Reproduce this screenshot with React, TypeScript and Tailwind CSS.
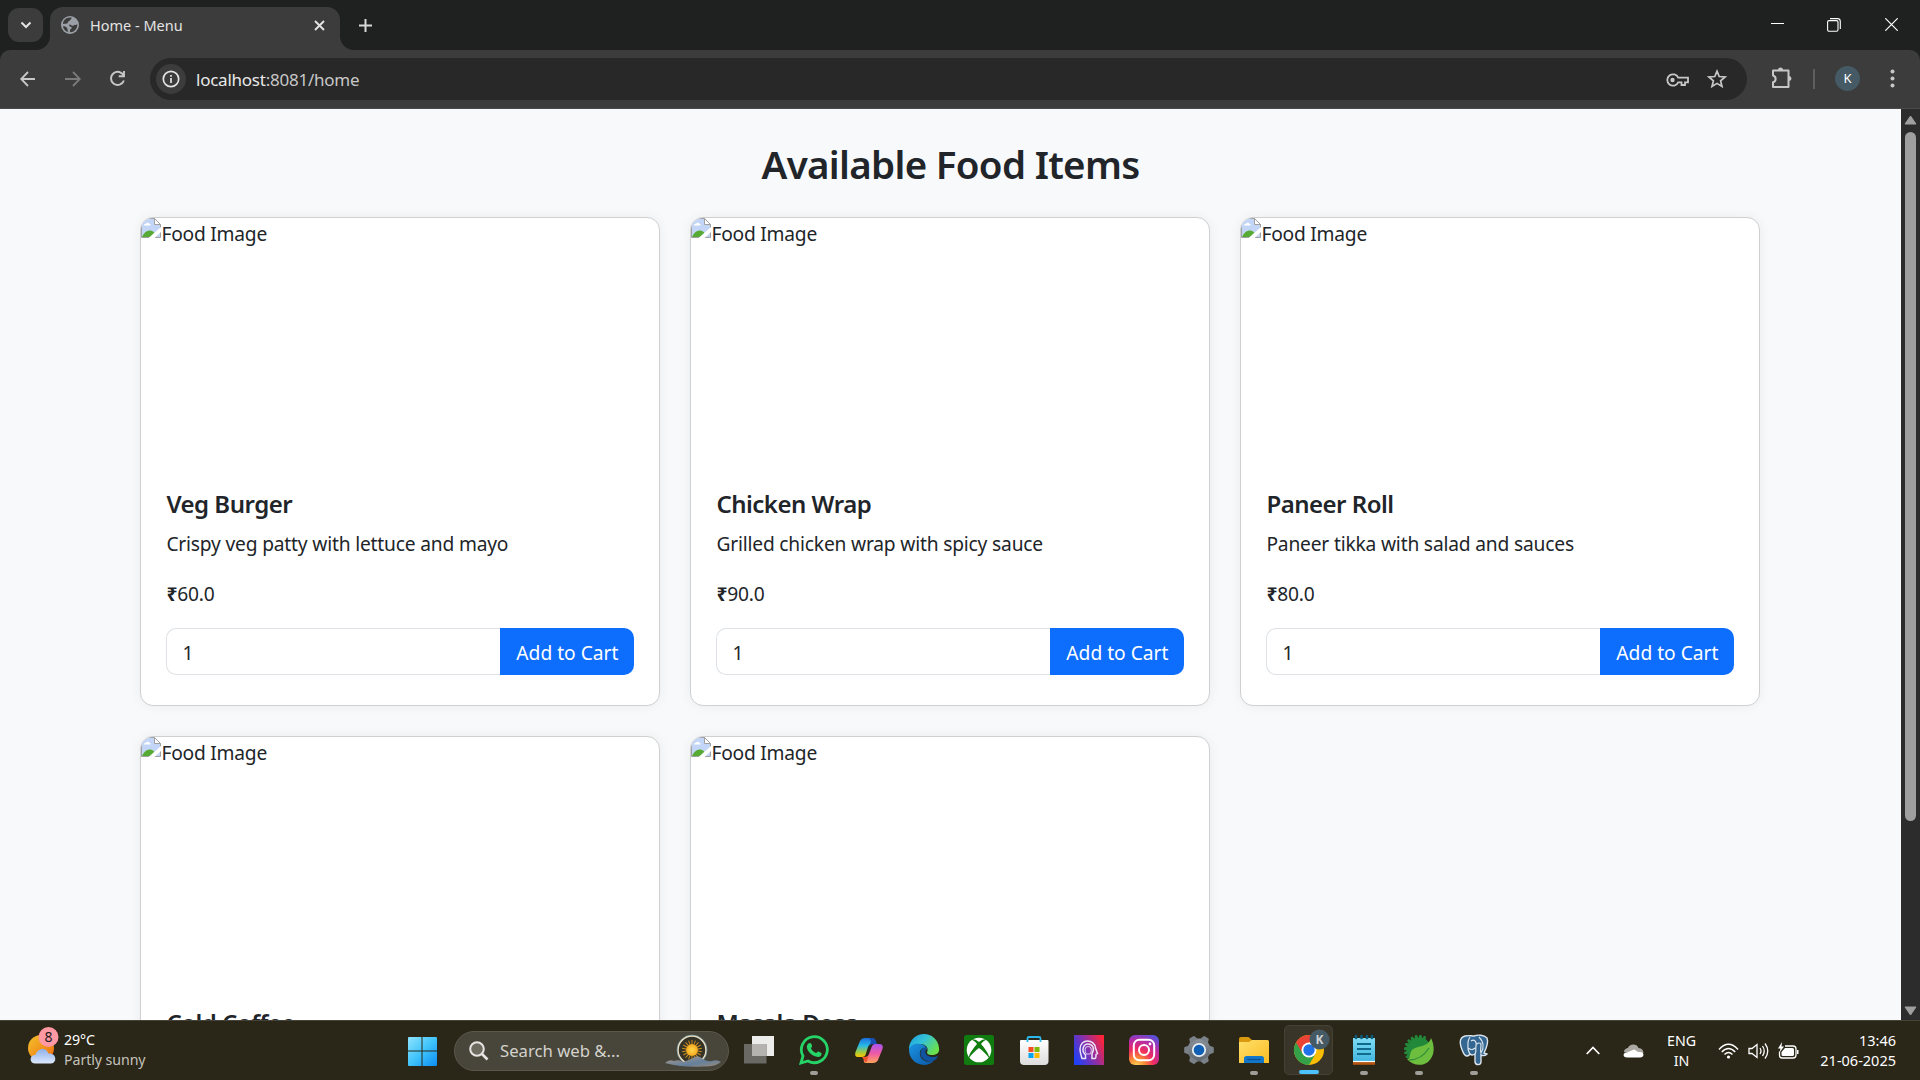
import React from 'react';

type Food = { name: string; desc?: string; price?: string };

const foods: Food[] = [
  { name: 'Veg Burger', desc: 'Crispy veg patty with lettuce and mayo', price: '60.0' },
  { name: 'Chicken Wrap', desc: 'Grilled chicken wrap with spicy sauce', price: '90.0' },
  { name: 'Paneer Roll', desc: 'Paneer tikka with salad and sauces', price: '80.0' },
  { name: 'Cold Coffee' },
  { name: 'Masala Dosa' },
];

function BrokenImage() {
  return (
    <svg width="20" height="20" viewBox="0 0 20 20" className="shrink-0">
      <path d="M0.5 0.5H13.5L19.5 6.5V19.5H0.5Z" fill="#c3d6f7" stroke="#a0a0a0" />
      <path d="M13.5 0.5V6.5H19.5Z" fill="#fff" stroke="#a0a0a0" />
      <path d="M3 7.5c0-1.6 1.6-2 2-1.6C5.500 4.200 8 4.200 8.500 6c1.300 0 1.500 1.500.5 1.500Z" fill="#fff" />
      <path d="M1 19C3 14.500 6 12.500 9 12.500c2 0 3.500 1 4.500 2.500L10 19Z" fill="#57ab35" />
      <path d="M7 20.500L20.500 8.500V13.500L13 20.500Z" fill="#fff" />
    </svg>
  );
}

function FoodCard({ food }: { food: Food }) {
  return (
    <div className="flex h-[489px] flex-col overflow-hidden rounded-[13px] border border-[#cfd0d1] bg-white shadow-[0_0_12px_rgba(0,0,0,0.06)]">
      <div className="flex h-[250px] text-[19.200px] leading-[31px] tracking-[-0.22px]">
        <BrokenImage />
        <span>Food Image</span>
      </div>
      <div className="flex flex-col px-[25px] pt-[21px]">
        <h5 className="mb-[10px] h-[30px] text-[24px] font-semibold leading-[30px] tracking-[-0.5px]">{food.name}</h5>
        {food.desc && (
          <>
            <p className="mb-5 h-[30px] text-[19.200px] leading-[30px] tracking-[-0.18px]">{food.desc}</p>
            <p className="mb-[19px] h-[30px] text-[19.200px] leading-[30px] tracking-[-0.18px]"><b>₹</b>{food.price}</p>
            <div className="flex h-[47px]">
              <div className="flex-1 rounded-l-[10px] border border-r-0 border-[#dee2e6] pl-[15px] text-[19.200px] leading-[47px]">1</div>
              <button className="w-[134px] rounded-r-[10px] bg-[#0d6efd] text-[19.200px] leading-[49px] text-white">Add to Cart</button>
            </div>
          </>
        )}
      </div>
    </div>
  );
}

function Chrome() {
  return (
    <header className="h-[109px] shrink-0 bg-[#1f2120] text-[#e3e3e3]">
      <div className="flex h-[50px]">
        <div className="mt-2 ml-2 flex h-[34px] w-[35px] items-center justify-center rounded-[11px] bg-[#3c3c3c]">
          <svg width="12" height="8" viewBox="0 0 12 8" fill="none" stroke="#e3e3e3" strokeWidth="2"><path d="M1.500 1.500L6 6L10.500 1.500" /></svg>
        </div>
        <div className="relative mt-[7px] ml-[7px] flex h-[43px] w-[290px] items-center rounded-t-[13px] bg-[#3c3c3c] pb-[7px]">
          <svg className="absolute bottom-0 -left-[14px]" width="14" height="14"><path d="M14 0V14H0A14 14 0 0 0 14 0Z" fill="#3c3c3c" /></svg>
          <svg className="absolute bottom-0 -right-[14px]" width="14" height="14"><path d="M0 0V14H14A14 14 0 0 1 0 0Z" fill="#3c3c3c" /></svg>
          <svg className="ml-[11px]" width="18" height="18" viewBox="0 0 18 18">
            <circle cx="9" cy="9" r="9" fill="#9aa0a6" />
            <path d="M11 2C9 3 10 4.500 8 5C6.500 5.500 7.500 7 6 7.500L2 8C2 4.500 5 1.600 9 1.600C9.700 1.600 10.400 1.700 11 2ZM16.300 8C15 9.500 13.500 8.500 12.500 9.500C11.500 10.500 10 9 9 8.500C7.500 8.500 8 10.500 9.500 10.800C11.500 11 11 13 9 13.500V16.300C13.500 16.300 16.700 12.500 16.300 8ZM1.900 10.500C3 10 5 10.500 6 12C7 13 6 14.500 7.500 16.100C4.700 15.500 2.500 13.500 1.900 10.500Z" fill="#3c3c3c" />
          </svg>
          <span className="mt-px ml-[11px] text-[14.500px]">Home - Menu</span>
          <svg className="ml-auto mr-[15px]" width="11" height="11" viewBox="0 0 11 11" stroke="#e3e3e3" strokeWidth="1.900"><path d="M1 1L10 10M10 1L1 10" /></svg>
        </div>
        <svg className="mt-[19px] ml-[19px]" width="13" height="13" viewBox="0 0 13 13" stroke="#d8d8d8" strokeWidth="2"><path d="M6.500 0V13M0 6.500H13" /></svg>
        <div className="ml-auto flex">
          <svg className="mt-[17px] mr-[43px]" width="13" height="13" viewBox="0 0 13 13" stroke="#fff" strokeWidth="1"><path d="M0 6.500H13" /></svg>
          <svg className="mt-[18px] mr-[44px]" width="14" height="14" viewBox="0 0 14 14" fill="none" stroke="#fff" strokeWidth="1.100"><rect x="0.600" y="2.600" width="10.400" height="10.600" rx="1.500" /><path d="M3 .6H10.500C12.500.6 13.300 1.500 13.300 3.500V11" /></svg>
          <svg className="mt-[18px] mr-[22px]" width="13" height="13" viewBox="0 0 13 13" stroke="#fff" strokeWidth="1.200"><path d="M.3.3L12.700 12.700M12.700.3L.3 12.700" /></svg>
        </div>
      </div>
      <div className="flex h-[59px] items-start rounded-t-[10px] border-b border-[#4a4a4a] bg-[#3c3c3c]">
        <svg className="mt-[21px] ml-5" width="16" height="16" viewBox="0 0 16 16" fill="none" stroke="#c7c7c7" strokeWidth="1.800"><path d="M15 8H1.500M8 1L1.200 8L8 15" /></svg>
        <svg className="mt-[21px] ml-[29px]" width="16" height="16" viewBox="0 0 16 16" fill="none" stroke="#7b7b7b" strokeWidth="1.800"><path d="M0 8H14.500M8 1L14.800 8L8 15" /></svg>
        <svg className="mt-[20px] ml-[28px]" width="17" height="17" viewBox="0 0 17 17" fill="none" stroke="#c7c7c7" strokeWidth="1.900"><path d="M14.800 6A6.600 6.600 0 1 0 14.900 10.500M15 1V6.300H9.700" /></svg>
        <div className="mt-2 ml-[24px] flex h-[42px] w-[1597px] items-center rounded-full bg-[#282828]">
          <div className="ml-1.5 flex size-[30px] items-center justify-center rounded-full bg-[#3c3c3c]">
            <svg width="18" height="18" viewBox="0 0 18 18" fill="none" stroke="#e3e3e3" strokeWidth="1.700"><circle cx="9" cy="9" r="7.700" /><path d="M9 8V13M9 5V6.700" /></svg>
          </div>
          <span className="mt-px ml-[10px] text-[17px] tracking-[-0.24px] text-[#c7c7c7]"><span className="text-[#e8e8e8]">localhost</span>:8081/home</span>
          <svg className="ml-auto mt-[2px]" width="23" height="14" viewBox="0 0 23 14" fill="none" stroke="#c7c7c7" strokeWidth="1.800"><path d="M12.200 4.700A5.700 5.700 0 1 0 12.200 9.300H15.500V12H19V9.300H22V4.700Z" /><circle cx="6.500" cy="7" r="2.200" fill="#c7c7c7" stroke="none" /></svg>
          <svg className="ml-[18px] mr-5" width="20" height="20" viewBox="0 0 20 20" fill="none" stroke="#c7c7c7" strokeWidth="1.700"><path d="M10 2.200L12.200 7.500L18 8L13.600 11.800L15 17.500L10 14.400L5 17.500L6.400 11.800L2 8L7.800 7.500Z" /></svg>
        </div>
        <svg className="mt-[17px] ml-6" width="22" height="23" viewBox="0 0 22 23" fill="none" stroke="#c7c7c7" strokeWidth="2"><path d="M2 3.500H17.500V20H2V15.300C5.500 14.500 5.500 9.500 2 8.500Z" strokeLinejoin="round" /><path d="M7 3A2.500 2.500 0 0 1 12 3ZM18 9A2.500 2.500 0 0 1 18 14Z" fill="#c7c7c7" stroke="none" /></svg>
        <div className="mt-[19px] ml-5 h-5 w-[2px] bg-[#5f5f5f]" />
        <div className="mt-4 ml-[20px] flex size-[25px] items-center justify-center rounded-full bg-[#455a64] text-[13px] text-white">K</div>
        <svg className="mt-[19px] ml-[30px]" width="5" height="19" viewBox="0 0 5 19" fill="#c7c7c7"><circle cx="2.500" cy="2.500" r="2" /><circle cx="2.500" cy="9.500" r="2" /><circle cx="2.500" cy="16.500" r="2" /></svg>
      </div>
    </header>
  );
}

function TaskIcon({ children, dot, active }: { children: React.ReactNode; dot?: boolean; active?: boolean }) {
  return (
    <div className={active ? 'relative mx-[3px] flex h-[50px] w-[49px] items-center justify-center rounded-[5px] border border-[#454133] bg-[#393528]' : 'relative flex h-[50px] w-[55px] items-center justify-center'}>
      <svg width="30" height="30" viewBox="0 0 30 30" className="overflow-visible">{children}</svg>
      {dot && <span className="absolute bottom-0 h-1 w-2 rounded-full bg-[#a09e98]" />}
      {active && <span className="absolute bottom-0 h-1 w-5 rounded-full bg-[#4cc2ff]" />}
    </div>
  );
}

function Defs() {
  return (
    <svg width="0" height="0" className="absolute">
      <defs>
        <linearGradient id="win" x1="0" y1="0" x2="1" y2="1"><stop stopColor="#8fe3fd" /><stop offset=".5" stopColor="#40c4fb" /><stop offset="1" stopColor="#0c8df5" /></linearGradient>
        <linearGradient id="sun" x1="0" y1="0" x2="1" y2="1"><stop stopColor="#f4c22b" /><stop offset="1" stopColor="#ee6a10" /></linearGradient>
        <linearGradient id="cloud" x1="0" y1="0" x2="0" y2="1"><stop stopColor="#8fb1ea" /><stop offset="1" stopColor="#dce8fc" /></linearGradient>
        <linearGradient id="copA" x1="0" y1="0" x2="0" y2="1"><stop stopColor="#1c6fe0" /><stop offset=".4" stopColor="#27b8e6" /><stop offset=".75" stopColor="#a4cc3c" /><stop offset="1" stopColor="#ffc400" /></linearGradient>
        <linearGradient id="copB" x1="0" y1="0" x2="0" y2="1"><stop stopColor="#a854f0" /><stop offset=".5" stopColor="#ee5aa5" /><stop offset="1" stopColor="#ffa35a" /></linearGradient>
        <linearGradient id="edgeA" x1="0" y1="0" x2="1" y2=".6"><stop stopColor="#1b9de2" /><stop offset=".5" stopColor="#35c3d4" /><stop offset="1" stopColor="#6be04b" /></linearGradient>
        <linearGradient id="edgeB" x1="0" y1="0" x2="1" y2="1"><stop stopColor="#1a94e0" /><stop offset="1" stopColor="#0b56a8" /></linearGradient>
        <linearGradient id="head" x1="0" y1=".7" x2="1" y2=".2"><stop stopColor="#2340f5" /><stop offset=".5" stopColor="#8a2fa8" /><stop offset="1" stopColor="#ff2338" /></linearGradient>
        <radialGradient id="insta" cx=".25" cy="1.050" r="1.150"><stop stopColor="#ffd65a" /><stop offset=".25" stopColor="#fb8a34" /><stop offset=".5" stopColor="#ee2c62" /><stop offset=".78" stopColor="#b32ca8" /><stop offset="1" stopColor="#5b50d8" /></radialGradient>
        <linearGradient id="gear" x1="0" y1="0" x2="0" y2="1"><stop stopColor="#8b9299" /><stop offset="1" stopColor="#5f676f" /></linearGradient>
        <linearGradient id="folder" x1="0" y1="0" x2="1" y2="1"><stop stopColor="#ffdf6b" /><stop offset="1" stopColor="#f9bd22" /></linearGradient>
        <linearGradient id="note" x1="0" y1="0" x2="0" y2="1"><stop stopColor="#7fdcf4" /><stop offset="1" stopColor="#3fb5de" /></linearGradient>
        <linearGradient id="bag" x1="0" y1="0" x2="0" y2="1"><stop stopColor="#fff" /><stop offset="1" stopColor="#dcdcdc" /></linearGradient>
        <linearGradient id="hill" x1="0" y1="0" x2="1" y2="1"><stop stopColor="#b09a88" /><stop offset=".6" stopColor="#64809c" /><stop offset="1" stopColor="#a08a78" /></linearGradient>
        <radialGradient id="glow"><stop stopColor="#ffd84a" /><stop offset="1" stopColor="#f7a81e" /></radialGradient>
      </defs>
    </svg>
  );
}

const gearTeeth = [0, 60, 120, 180, 240, 300];
const rays = [0, 20, 40, 60, 80, 100, 120, 140, 160, 180, 200, 220, 240, 260, 280, 300, 320, 340];
const springTeeth = [150, 168, 186, 204, 222, 240, 258, 276, 294];

function Taskbar() {
  return (
    <footer className="flex h-[60px] shrink-0 items-center border-t border-[#45443a] bg-[#2a2618] text-white">
      <Defs />
      <div className="flex w-[394px] items-center pl-[28px]">
        <svg width="32" height="38" viewBox="0 0 32 38" className="-mt-[11px] overflow-visible">
          <circle cx="13" cy="22" r="13" fill="url(#sun)" />
          <path d="M7.500 37.500C.5 37.500 1.500 28.500 7.500 29C9 22.500 18 20.500 20.500 27.500C29 26.500 29.500 37.500 22.500 37.500Z" fill="url(#cloud)" />
          <circle cx="20.500" cy="11" r="10" fill="#ff98a2" />
          <text x="20.500" y="16" textAnchor="middle" fontSize="14" fill="#1c1c1c">8</text>
        </svg>
        <div className="-mt-[2px] ml-1 text-[14.200px] leading-5 tracking-[-0.08px]">
          <div>29°C</div>
          <div className="text-[#c4c2bc]">Partly sunny</div>
        </div>
      </div>
      <TaskIcon>
        <path d="M1 2Q1 1 2 1H14.500V14.500H1ZM15.500 1H29Q30 1 30 2V14.500H15.500ZM1 15.500H14.500V30H2Q1 30 1 29ZM15.500 15.500H30V29Q30 30 29 30H15.500Z" fill="url(#win)" />
      </TaskIcon>
      <div className="ml-[5px] flex h-10 w-[275px] items-center rounded-full border border-[#5b584b] bg-[#48453a]">
        <svg className="ml-[14px]" width="20" height="20" viewBox="0 0 20 20" fill="#6d6a60" stroke="#e6e5e2" strokeWidth="2"><circle cx="8" cy="8" r="6.800" /><path d="M13 13L18.500 18.500" strokeWidth="2.600" /></svg>
        <span className="ml-[11px] text-[16.700px] text-[#d4d2cc]">Search web &amp;...</span>
        <svg className="ml-auto mr-[7px] overflow-visible" width="56" height="32" viewBox="0 0 56 32">
          <circle cx="27" cy="15" r="14" fill="#353228" stroke="#f0e2c2" strokeWidth="1.500" />
          <circle cx="27" cy="15" r="15" fill="none" stroke="#7fb0c0" strokeWidth=".6" />
          {rays.map((a) => <path key={a} d="M27 5V9" stroke="#c98d1c" strokeWidth="1" transform={`rotate(${a} 27 15)`} />)}
          <circle cx="27" cy="15" r="6" fill="url(#glow)" />
          <path d="M0 28Q4 24 9 26Q14 24 18 27Q24 25 28 23Q33 19 38 24Q43 27 47 26Q52 24 56 27Q50 32 38 31.500Q20 33 0 28Z" fill="url(#hill)" />
        </svg>
      </div>
      <div className="-mt-[2px] ml-[2px] flex items-center">
        <TaskIcon>
          <path d="M8 1H30V21H8Z" fill="#ececea" /><path d="M0 9H22.500V28.500H0Z" fill="#6a6964" /><path d="M8 9H22.500V21H8Z" fill="#b4b3b0" />
        </TaskIcon>
        <TaskIcon dot>
          <path d="M2 28L4 21A13 13 0 1 1 9 26Z" fill="none" stroke="#25d366" strokeWidth="2.800" />
          <path d="M10.500 8C12 7.500 12.500 9 13 10.500C13.500 12 12 12.500 12 13.500C13 15.500 15 17.500 17 18C18 18 18.500 16 19.500 16.500L22.500 18C23 20.500 21 22 19 22C13 21.500 8 16 7.800 12C7.800 10 9 8.500 10.500 8Z" fill="#25d366" />
        </TaskIcon>
        <TaskIcon>
          <path d="M6 6Q7.500 3 11 3H18Q21 3 20 7L19 9H17Q15 9 14 12L11.500 20Q11 22 8 22H4Q0 22 1.500 17Z" fill="url(#copA)" />
          <path d="M15 3H18Q21 3 22 6L23 9H19Q16 9 15 12L17 6Z" fill="#174fb5" />
          <path d="M24 25Q22.500 28 19 28H12Q9 28 10 24L11 22Q14 22 15 19L18 11Q19 9 21 9H25Q30 9 28.500 14Z" fill="url(#copB)" />
          <path d="M8 22H11Q14 22 15 19L13 26Q12 28.500 10.500 26Z" fill="#f0542c" />
        </TaskIcon>
        <TaskIcon>
          <path d="M0 15A15 15 0 0 1 30 13C31 18 27 20.500 22 20C18 19.500 17.500 18 18.500 16C19.500 12 16 9 11 9C5 9 1 12 0 15Z" fill="url(#edgeA)" />
          <path d="M0 15C1 10 6 8 11 9C15 9.500 18 12 18 15C14 11 10 15 11 20C12 26 19 28 25 25.500C22 29 18 30.300 13 29.800C5 28.500 0 22 0 15Z" fill="url(#edgeB)" />
          <path d="M18 12C13 12 10 17 12 21C14 26 20 27 25 25.500C27 24.500 28.500 22.500 29 21C25 23 18 22 16.500 18C16 16 17 14 18 12Z" fill="#10539f" />
        </TaskIcon>
        <TaskIcon>
          <rect width="30" height="30" rx="2.500" fill="#107c10" /><circle cx="15" cy="15" r="12.300" fill="#fff" />
          <path d="M7 4.500C10 3.800 13 5.500 15 7C17 5.500 20 3.800 23 4.500C20.500 5 18.500 7 17 9C21 13.500 25 19 25.500 23.500C22 19 18.500 15.500 15 13C11.500 15.500 8 19 4.500 23.500C5 19 9 13.500 13 9C11.500 7 9.500 5 7 4.500Z" fill="#107c10" />
        </TaskIcon>
        <TaskIcon>
          <path d="M8.500 7V3.500Q8.500 2 10 2H20Q21.500 2 21.500 3.500V7" fill="none" stroke="#2cb8ec" strokeWidth="1.800" />
          <path d="M1 6Q1 5 2 5H28.500Q29.500 5 29.500 6V26Q29.500 30 25.500 30H5Q1 30 1 26Z" fill="url(#bag)" />
          <path d="M8.500 7V5M21.500 7V5" stroke="#2cb8ec" strokeWidth="1.800" />
          <path d="M9.500 12H14.500V17H9.500Z" fill="#f25022" /><path d="M15.500 12H20.500V17H15.500Z" fill="#7fba00" /><path d="M9.500 18H14.500V23H9.500Z" fill="#00a4ef" /><path d="M15.500 18H20.500V23H15.500Z" fill="#ffb900" />
        </TaskIcon>
        <TaskIcon>
          <rect width="30" height="30" fill="url(#head)" />
          <path d="M8 23.500H11.500V20C7 16 9 9 14 9C19 9 21 14 18 18.500V23.500H21Q22 23.500 22 19.500L23.500 18.500L21.500 13C21 4 6 3 6 14C6 18 7 20 8 23.500Z" fill="none" stroke="#ece3f4" strokeWidth="1.500" />
          <path d="M12.500 19C10 16 11 11.500 14 11.500C18 11.500 18 16.500 16 19Z" fill="none" stroke="#d7c0ee" strokeWidth="1.100" />
        </TaskIcon>
        <TaskIcon>
          <rect width="30" height="30" rx="6" fill="url(#insta)" />
          <rect x="4.800" y="4.800" width="20.400" height="20.400" rx="5.500" fill="none" stroke="#fff" strokeWidth="2" /><circle cx="15" cy="15" r="5" fill="none" stroke="#fff" strokeWidth="2" /><circle cx="21" cy="9" r="1.400" fill="#fff" />
        </TaskIcon>
        <TaskIcon>
          <circle cx="15" cy="15" r="11.500" fill="url(#gear)" />
          {gearTeeth.map((a) => <path key={a} d="M10.500 5L12 .8Q12.200.2 13 .2H17Q17.800.2 18 .8L19.500 5Z" fill="#7a8188" transform={`rotate(${a + 30} 15 15)`} />)}
          <circle cx="15" cy="15" r="6.200" fill="#0f5fb4" stroke="#e8edf2" strokeWidth="1.800" />
        </TaskIcon>
        <TaskIcon dot>
          <path d="M0 4Q0 2 2 2H9.500L13 5V9H0Z" fill="#d99a10" /><path d="M0 7H10L13 5H28.500Q30 5 30 6.500V28H0Z" fill="url(#folder)" />
          <path d="M5 28V23.500Q5 21 7.500 21H22.500Q25 21 25 23.500V28Z" fill="#1277c8" /><path d="M8.500 24.500H21.500" stroke="#0a4f91" strokeWidth="1.300" />
        </TaskIcon>
        <TaskIcon active>
          <circle cx="15" cy="15" r="15" fill="#fbbc04" />
          <path d="M2 7.500A15 15 0 0 0 15 30L21.500 18.800L15 15Z" fill="#34a047" />
          <path d="M2 7.500L8.600 18.500L15 15L15 7.500L28 7.500A15 15 0 0 0 2 7.500Z" fill="#ea4335" />
          <circle cx="15" cy="15" r="7.500" fill="#fff" /><circle cx="15" cy="15" r="5.700" fill="#1f72e8" />
          <circle cx="25.500" cy="4.500" r="10" fill="#455a64" /><text x="25.500" y="8.800" textAnchor="middle" fontSize="12" fontWeight="700" fill="#cfd3d5">K</text>
        </TaskIcon>
        <TaskIcon dot>
          <path d="M4 26.500H26V29.800H4Z" fill="#b4560f" /><path d="M4 3H26V27H4Z" fill="url(#note)" /><path d="M4 26.500H26" stroke="#fff" strokeWidth="1.200" />
          <path d="M7 1V3M12.500 1V3M18 1V3M23 1V3" stroke="#0c5c7c" strokeWidth="2.600" strokeLinecap="round" /><path d="M8 9H22M8 14H22M8 19H22" stroke="#0f6a8c" strokeWidth="1.900" />
        </TaskIcon>
        <TaskIcon dot>
          <circle cx="15" cy="15" r="12.500" fill="#22893a" />
          {springTeeth.map((a) => <path key={a} d="M27 13.300L30 13.800V16.200L27 16.700Z" fill="#22893a" transform={`rotate(${a} 15 15)`} />)}
          <path d="M27 3C31 11 31 21 24 27C17 32 8 30 3 24C7 24 5 18 8 15C13 10 24 13 27 3Z" fill="#6dbe3f" />
          <path d="M5 25C14 25 20 21 25 13" fill="none" stroke="#2f8f3a" strokeWidth="1.300" />
        </TaskIcon>
        <TaskIcon dot>
          <path d="M6 1C11 0 12 1 15 1C19-.5 25 0 28 3C30 8 27 14 25 18L28 19C26 21 24 21 22 20V27C22 30 17 31 16 27V19C13 21 12 20 11 19C9 22 6 22 4 17C1 10-1 3 6 1Z" fill="#336791" stroke="#dbe4ec" strokeWidth="1.400" />
          <path d="M11 2C8 6 9 10 9 13C9 16 10 17 11 19M12 6C15 4 18 6 17 11C16 14 18 16 16 19M20 2C25 7 25 13 22 18C21 15 22 13 22 10C22 7 19 8 18 9M9 13Q13 16 16 13" fill="none" stroke="#dbe4ec" strokeWidth="1.200" />
        </TaskIcon>
      </div>
      <div className="ml-auto flex items-center">
        <svg className="mr-[23px]" width="14" height="9" viewBox="0 0 14 9" fill="none" stroke="#fff" strokeWidth="1.700"><path d="M.7 8L7 1.500L13.300 8" /></svg>
        <svg className="mr-[22px]" width="21" height="14" viewBox="0 0 21 14"><path d="M1 8C1 5 4 4 5 4C6-.5 14-1 15.500 4C19 4 20.500 7 20.500 9L10 10Z" fill="#aaa8a2" /><path d="M4 13.500C-1 13.500 0 8 4 8.500L11 5.500C13 6 14 8 16 8C22 7.500 21.500 13.500 17 13.500Z" fill="#fff" /></svg>
        <div className="mr-[21px] w-[31px] text-center text-[14.200px] leading-5"><div>ENG</div><div>IN</div></div>
        <svg className="mr-[9px]" width="21" height="16" viewBox="0 0 21 16" fill="none" stroke="#fff" strokeWidth="1.400"><path d="M1 6.500Q10.500-4 20 6.500M3.800 9Q10.500 2 17.200 9M6.500 11.500Q10.500 7.500 14.500 11.500" /><circle cx="10.500" cy="14" r="1.600" fill="#fff" stroke="none" /></svg>
        <svg className="mr-[9px]" width="21" height="18" viewBox="0 0 21 18" fill="none" stroke="#fff" strokeWidth="1.300"><path d="M1 6.500H4L9 2.500V15.500L4 11.500H1ZM12 6Q14 9 12 12M14.500 4Q18 9 14.500 14M17 1.500Q22.500 9 17 16.500" /></svg>
        <svg className="mr-[19px]" width="21" height="18" viewBox="0 0 21 18"><path d="M7 4H15Q18 4 18 7V13Q18 16 15 16H4Q1.500 16 1.500 13V9.500" fill="none" stroke="#fff" strokeWidth="1.300" /><path d="M7 6H14.500Q16 6 16 7.500V12.500Q16 14 14.500 14H5Q3.500 14 3.500 12.500V10ZM19 8H20.500V12H19ZM4 0L0 6.500H2.500L1.500 10.500L6 4.500H3.500Z" fill="#fff" /></svg>
        <div className="-mt-[2px] mr-6 w-[78px] whitespace-nowrap text-right text-[14.500px] leading-5"><div>13:46</div><div>21-06-2025</div></div>
      </div>
    </footer>
  );
}

export default function App() {
  return (
    <div className="flex h-[1080px] w-[1920px] flex-col overflow-hidden font-['Noto_Sans','Open_Sans',sans-serif]">
      <Chrome />
      <div className="flex min-h-0 flex-1">
        <main className="min-w-0 flex-1 overflow-hidden bg-[#f8f9fb] pt-[31px] text-[#212529]">
          <h2 className="mb-[29px] text-center text-[38.500px] font-semibold leading-[48px] tracking-[-0.7px]">Available Food Items</h2>
          <div className="ml-[140.400px] grid w-[1620px] grid-cols-3 gap-[30px]">
            {foods.map((f) => <FoodCard key={f.name} food={f} />)}
          </div>
        </main>
        <aside className="flex w-[19px] shrink-0 flex-col items-center bg-[#2c2c2c]">
          <svg className="mt-[6px]" width="13" height="10" viewBox="0 0 13 10"><path d="M6.500 1L12 9H1Z" fill="#9f9f9f" stroke="#9f9f9f" strokeLinejoin="round" /></svg>
          <div className="mt-[7px] h-[689px] w-[11px] rounded-full bg-[#9f9f9f]" />
          <svg className="mt-auto mb-[4px]" width="13" height="10" viewBox="0 0 13 10"><path d="M6.500 9L12 1H1Z" fill="#9f9f9f" stroke="#9f9f9f" strokeLinejoin="round" /></svg>
        </aside>
      </div>
      <Taskbar />
    </div>
  );
}
